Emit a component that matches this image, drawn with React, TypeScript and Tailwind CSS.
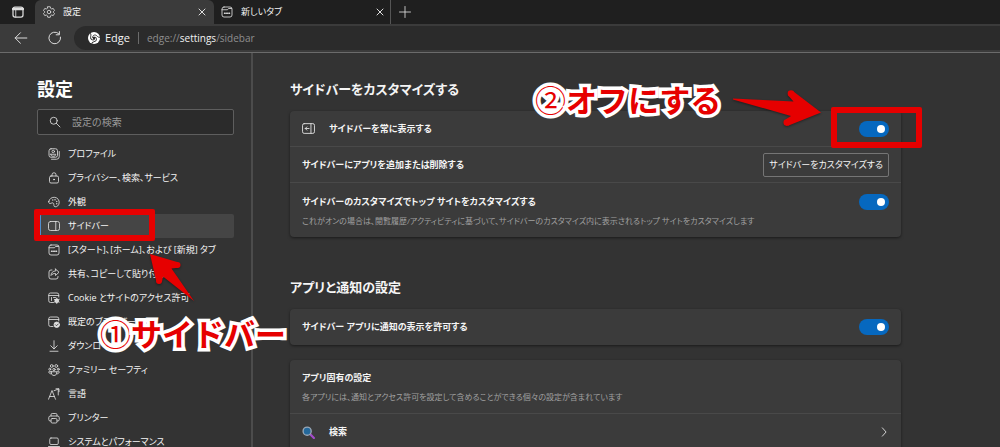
import type { ReactNode } from "react";

function Icon({ children, className = "size-3" }: { children: ReactNode; className?: string }) {
  return (
    <svg
      viewBox="0 0 24 24"
      fill="none"
      stroke="currentColor"
      strokeWidth="1.7"
      strokeLinecap="round"
      strokeLinejoin="round"
      aria-hidden="true"
      className={`shrink-0 text-[#dedede] ${className}`}
    >
      {children}
    </svg>
  );
}

const newTabShape = (
  <>
    <rect x="2" y="2" width="20" height="20" rx="4" />
    <path d="M2 7.500h11l2-2.500h6" />
    <path d="M7 14.500h1.500M11.300 14.500h1.500M15.600 14.500h1.500" strokeWidth="2.800" />
  </>
);

const navItems: { label: string; shape: ReactNode; active?: boolean }[] = [
  {
    label: "プロファイル",
    shape: (
      <>
        <rect x="2" y="1.500" width="17" height="17" rx="4" />
        <path d="M7 22.500h10a5.500 5.500 0 0 0 5.500-5.500V7" />
        <circle cx="10.500" cy="7" r="2.500" />
        <path d="M5.500 12.500h10c0 3-2.200 4-5 4s-5-1-5-4z" />
      </>
    ),
  },
  {
    label: "プライバシー、検索、サービス",
    shape: (
      <>
        <rect x="3" y="8" width="18" height="14" rx="3" />
        <path d="M8 8V5.500a4 4 0 0 1 8 0V8" />
        <circle cx="12" cy="15" r="1" fill="currentColor" />
      </>
    ),
  },
  {
    label: "外観",
    shape: (
      <>
        <path d="M1.500 11C3 5 8 2 13.500 2.700c6 .8 9.500 6 8.800 11.300-.7 5-4.300 8-8 7.500-3.800-.5-2-4.500-3-6.500-1.500-3-4.500-.2-7 0-2.200.1-3.300-1.500-2.800-4z" />
        <path d="M9.500 8h.1M14 7.500h.1M17.500 11h.1M17.500 15.500h.1" strokeWidth="2.600" />
      </>
    ),
  },
  {
    label: "サイドバー",
    active: true,
    shape: (
      <>
        <rect x="1" y="3" width="22" height="18" rx="4" />
        <path d="M15.500 3v18" />
      </>
    ),
  },
  { label: "[スタート]、[ホーム]、および [新規] タブ", shape: newTabShape },
  {
    label: "共有、コピーして貼り付け",
    shape: (
      <>
        <path d="M8 4H6a4 4 0 0 0-4 4v10a4 4 0 0 0 4 4h10a4 4 0 0 0 4-4v-1" />
        <path d="M15 2l7 6.500-7 6.500v-4c-4-.3-6.500 1-9 4 .3-5.500 3.500-9 9-9.300z" />
      </>
    ),
  },
  {
    label: "Cookie とサイトのアクセス許可",
    shape: (
      <>
        <path d="M11 21H5a3.500 3.500 0 0 1-3.500-3.500v-12A3.500 3.500 0 0 1 5 2h13a3.500 3.500 0 0 1 3.500 3.500V10M1.500 7h20M7 11v6M11 11h4" />
        <circle cx="17.500" cy="17.500" r="3" strokeWidth="3" />
        <path d="M17.500 12v11M12.500 14.800l10 5.400M12.500 20.200l10-5.400" />
      </>
    ),
  },
  {
    label: "既定のブラウザー",
    shape: (
      <>
        <path d="M10 21H5a3.500 3.500 0 0 1-3.500-3.500v-12A3.500 3.500 0 0 1 5 2h13a3.500 3.500 0 0 1 3.500 3.500V10M1.500 7h20" />
        <circle cx="17.500" cy="17.500" r="5.500" fill="currentColor" />
        <path d="M15 17.500l2 2 3.500-3.500" stroke="#333333" />
      </>
    ),
  },
  { label: "ダウンロード", shape: <path d="M12 1.500v16M5.500 11.500L12 18l6.500-6.500M4 22.500h16" /> },
  {
    label: "ファミリー セーフティ",
    shape: (
      <>
        <circle cx="7.500" cy="4" r="2.800" />
        <circle cx="16.500" cy="4" r="2.800" />
        <circle cx="3.500" cy="10.500" r="2" />
        <circle cx="20.500" cy="10.500" r="2" />
        <circle cx="12" cy="11" r="2.300" />
        <path d="M6.500 15.500h11c.5 4.500-2 7.500-5.500 7.500s-6-3-5.500-7.500zM6 15.500H1.500c0 2.500 2 4.300 5 4.300M18 15.500h4.500c0 2.500-2 4.300-5 4.300" />
      </>
    ),
  },
  { label: "言語", shape: <path d="M1 22.500L8 5l7 17.500M3.500 17h9M12 5.500l9-3.500M16 1.500h6v6M20.500 3v11" /> },
  {
    label: "プリンター",
    shape: (
      <>
        <path d="M6 8V5.500A2.500 2.500 0 0 1 8.500 3h7A2.500 2.500 0 0 1 18 5.500V8" />
        <path d="M6 18H4.500A3 3 0 0 1 1.500 15v-3.500A3.500 3.500 0 0 1 5 8h14a3.500 3.500 0 0 1 3.500 3.500V15a3 3 0 0 1-3 3H18" />
        <rect x="6" y="13" width="12" height="9" rx="2.500" />
      </>
    ),
  },
  {
    label: "システムとパフォーマンス",
    shape: (
      <>
        <rect x="3.500" y="4" width="17" height="13" rx="2.500" />
        <path d="M1 21h22" />
      </>
    ),
  },
];

function Toggle({ id }: { id: string }) {
  return (
    <input
      id={id}
      type="checkbox"
      role="switch"
      defaultChecked
      className="flex h-4 w-[30px] shrink-0 appearance-none items-center justify-start rounded-full bg-[#5c5c5c] px-1 before:size-2 before:rounded-full before:bg-white checked:justify-end checked:bg-[#0668bf]"
    />
  );
}

function Card({ children }: { children: ReactNode }) {
  return <div className="divide-y divide-[#494949] rounded-sm bg-[#3b3b3b] shadow-[0_1px_3px_rgba(0,0,0,0.5)]">{children}</div>;
}

function Close({ label }: { label: string }) {
  return (
    <button type="button" aria-label={label} className="ml-auto flex size-4 items-center justify-center">
      <Icon className="size-2">
        <path d="M3 3l18 18M21 3L3 21" strokeWidth="3" />
      </Icon>
    </button>
  );
}

function Note({ mark, text, className }: { mark: string; text: string; className: string }) {
  return (
    <p
      className={`pointer-events-none absolute text-[31px] leading-10 font-bold whitespace-nowrap text-[#e60000] [-webkit-text-stroke:7px_white] [font-feature-settings:normal] [paint-order:stroke_fill] [stroke-linejoin:round] ${className}`}
    >
      <span className="font-normal">{mark}</span>
      {text}
    </p>
  );
}

export default function App() {
  return (
    <div className="relative flex h-screen flex-col overflow-hidden bg-[#333333] font-['Open_Sans','Noto_Sans_CJK_JP',sans-serif] text-[9px] leading-4 text-[#f5f5f5] [font-feature-settings:'palt']">
      <header className="shrink-0 bg-[#3b3b3b]">
        <div className="flex h-6 bg-[#1f1f1f]">
          <button type="button" aria-label="タブ操作メニュー" className="flex w-[35px] items-center justify-center">
            <Icon>
              <rect x="2" y="2" width="20" height="20" rx="4" strokeWidth="2.500" />
              <path d="M2 6h20" strokeWidth="5" />
              <path d="M7.500 7v15" />
            </Icon>
          </button>
          <div className="flex w-[179px] items-center gap-2 rounded-t-md bg-[#3b3b3b] pr-1 pl-2">
            <Icon>
              <path d="M9.500 1.500h5l.8 3.200 2 1.200 3.200-1 2.500 4.200-2.400 2.300v1.200l2.400 2.300-2.500 4.200-3.200-1-2 1.200-.8 3.200h-5l-.8-3.200-2-1.200-3.200 1L1 14.900l2.400-2.300v-1.200L1 9.100l2.500-4.200 3.200 1 2-1.200z" />
              <circle cx="12" cy="12" r="3.500" />
            </Icon>
            <span>設定</span>
            <Close label="設定タブを閉じる" />
          </div>
          <div className="flex w-[177px] items-center gap-2 border-r border-[#555555] pr-[2px] pl-[7px]">
            <Icon>{newTabShape}</Icon>
            <span>新しいタブ</span>
            <Close label="新しいタブを閉じる" />
          </div>
          <button type="button" aria-label="タブを追加" className="flex w-7 items-center justify-center">
            <Icon>
              <path d="M12 1v22M1 12h22" />
            </Icon>
          </button>
        </div>
        <div className="flex h-[29px] items-center border-b border-[#6b6b6b] pl-[14px]">
          <button type="button" aria-label="戻る" className="mr-5">
            <Icon className="size-[14px]">
              <path d="M22 12H2M11 3l-9 9 9 9" />
            </Icon>
          </button>
          <button type="button" aria-label="更新" className="mr-3">
            <Icon className="size-[14px]">
              <path d="M21.500 10.500A10 10 0 1 1 18 4.200M19.500 1v5.500H14" />
            </Icon>
          </button>
          <div className="flex h-6 flex-1 items-center rounded-l-full bg-[#2b2b2b] pl-[14px] text-[11px]">
            <svg viewBox="0 0 24 24" aria-hidden="true" className="mr-[5px] size-3">
              <circle cx="12" cy="12" r="12" fill="#fff" />
              <circle cx="12" cy="12" r="2.500" fill="#2b2b2b" />
              <g fill="none" stroke="#2b2b2b" strokeWidth="1.800">
                <path d="M9.500 12C8 7 14 4 17.500 7.500c2 2 3 3.500 6.500 3" />
                <path d="M9.500 12C8 7 14 4 17.500 7.500c2 2 3 3.500 6.500 3" transform="rotate(120 12 12)" />
                <path d="M9.500 12C8 7 14 4 17.500 7.500c2 2 3 3.500 6.500 3" transform="rotate(240 12 12)" />
              </g>
            </svg>
            <span className="mr-2">Edge</span>
            <span className="mr-2 h-3 w-px bg-[#6b6b6b]" />
            <span className="text-[10px] text-[#8e8e8e]">
              edge://<span className="text-[#f2f2f2]">settings</span>/sidebar
            </span>
          </div>
        </div>
      </header>

      <div className="flex min-h-0 flex-1">
        <nav aria-label="設定" className="w-[253px] shrink-0 border-r-2 border-[#4c4c4c] pt-6 pr-[17px] pl-[37px]">
          <h1 className="text-lg leading-6 font-bold text-white">設定</h1>
          <div className="mt-2 flex h-[26px] items-center gap-[11px] rounded-xs border border-[#5e5e5e] bg-[#2b2b2b] px-[11px] text-[10px]">
            <Icon>
              <circle cx="9.500" cy="9.500" r="7" />
              <path d="M14.500 14.500L22 22" />
            </Icon>
            <input
              type="search"
              aria-label="設定の検索"
              placeholder="設定の検索"
              className="w-full min-w-0 bg-transparent outline-none placeholder:text-[#999999]"
            />
          </div>
          <ul className="mt-[7px]">
            {navItems.map((item) => (
              <li key={item.label}>
                <a
                  href="#"
                  aria-current={item.active ? "page" : undefined}
                  className={
                    item.active
                      ? "ml-[3px] flex h-6 items-center gap-2 rounded-xs border-l border-[#4f8fd0] bg-[#454545] pl-[7px] whitespace-nowrap"
                      : "ml-[3px] flex h-6 items-center gap-2 border-l border-transparent pl-[7px] whitespace-nowrap"
                  }
                >
                  <Icon>{item.shape}</Icon>
                  {item.label}
                </a>
              </li>
            ))}
          </ul>
        </nav>

        <main className="min-w-0 flex-1 pt-6 pr-[99px] pl-[37px]">
          <section>
            <h2 className="mb-[10px] text-[13px] leading-6 font-bold">サイドバーをカスタマイズする</h2>
            <Card>
              <div className="flex h-9 items-center px-3">
                <Icon className="mr-[14px] size-[13px]">
                  <rect x="1" y="3" width="22" height="18" rx="3" />
                  <path d="M16.500 3v18M13 12H6M9 9l-3 3 3 3" />
                </Icon>
                <label htmlFor="always-show" className="flex-1 font-bold">
                  サイドバーを常に表示する
                </label>
                <Toggle id="always-show" />
              </div>
              <div className="flex h-9 items-center justify-between px-3">
                <span className="font-bold">サイドバーにアプリを追加または削除する</span>
                <button type="button" className="h-6 rounded-xs border border-[#757575] px-[5px]">
                  サイドバーをカスタマイズする
                </button>
              </div>
              <div className="px-3 pt-[11px] pb-2">
                <div className="flex items-center justify-between">
                  <label htmlFor="top-sites" className="font-bold">
                    サイドバーのカスタマイズでトップ サイトをカスタマイズする
                  </label>
                  <Toggle id="top-sites" />
                </div>
                <p className="mt-[3px] text-[8px] text-[#a0a0a0]">
                  これがオンの場合は、閲覧履歴/アクティビティに基づいて、サイドバーのカスタマイズ内に表示されるトップ サイトをカスタマイズします
                </p>
              </div>
            </Card>
          </section>
          <section className="mt-[38px]">
            <h2 className="mb-[10px] text-[13px] leading-6 font-bold">アプリと通知の設定</h2>
            <Card>
              <div className="flex h-9 items-center justify-between px-3">
                <label htmlFor="notifications" className="font-bold">
                  サイドバー アプリに通知の表示を許可する
                </label>
                <Toggle id="notifications" />
              </div>
            </Card>
            <div className="mt-[15px]">
              <Card>
                <div className="px-3 pt-[10px] pb-2">
                  <h3 className="font-bold">アプリ固有の設定</h3>
                  <p className="mt-[3px] text-[8px] text-[#a0a0a0]">
                    各アプリには、通知とアクセス許可を設定して含めることができる個々の設定が含まれています
                  </p>
                </div>
                <a href="#" className="flex h-9 items-center px-3">
                  <svg viewBox="0 0 24 24" aria-hidden="true" className="mr-[14px] size-[13px]">
                    <path d="M15 15l7 7" stroke="#a24bc8" strokeWidth="4" strokeLinecap="round" />
                    <circle cx="9.500" cy="9.500" r="7.500" fill="#24689b" stroke="#9aa7b5" strokeWidth="2.500" />
                  </svg>
                  <span className="flex-1 font-bold">検索</span>
                  <Icon className="size-[10px]">
                    <path d="M8 2l9 10-9 10" strokeWidth="2.200" />
                  </Icon>
                </a>
              </Card>
            </div>
          </section>
        </main>
      </div>

      <div className="pointer-events-none absolute top-[209px] left-[34px] h-8 w-[121px] rounded-xs border-6 border-[#e60000]" />
      <div className="pointer-events-none absolute top-[107px] left-[831px] h-[41px] w-[91px] rounded-xs border-6 border-[#e60000]" />
      <svg
        viewBox="0 0 50 54"
        fill="#e60000"
        aria-hidden="true"
        className="pointer-events-none absolute top-[250px] left-[147px] h-[54px] w-[50px] drop-shadow-[0_1px_1px_rgba(0,0,0,0.4)]"
      >
        <path d="M3 4L31 12.200 31.200 17.700 24.500 18.500 47 51 16 26.500 15 31.500 9.200 31z" />
        <circle cx="30.500" cy="15" r="3" />
        <circle cx="12" cy="31" r="3" />
      </svg>
      <svg
        viewBox="0 0 94 42"
        fill="#e60000"
        aria-hidden="true"
        className="pointer-events-none absolute top-[86px] left-[730px] h-[42px] w-[94px] drop-shadow-[0_1px_1px_rgba(0,0,0,0.4)]"
      >
        <path d="M3 13.500V12.500L63.500 15.500 58.300 9.500 63.500 5.500 91 26.500 58 39.800 55.500 33.500 61 30z" />
        <circle cx="61" cy="7.500" r="3.300" />
        <circle cx="56.800" cy="36.600" r="3.300" />
      </svg>
      <Note mark="①" text="サイドバー" className="top-[314px] left-[100px]" />
      <Note mark="②" text="オフにする" className="top-[80px] left-[535px]" />
    </div>
  );
}
